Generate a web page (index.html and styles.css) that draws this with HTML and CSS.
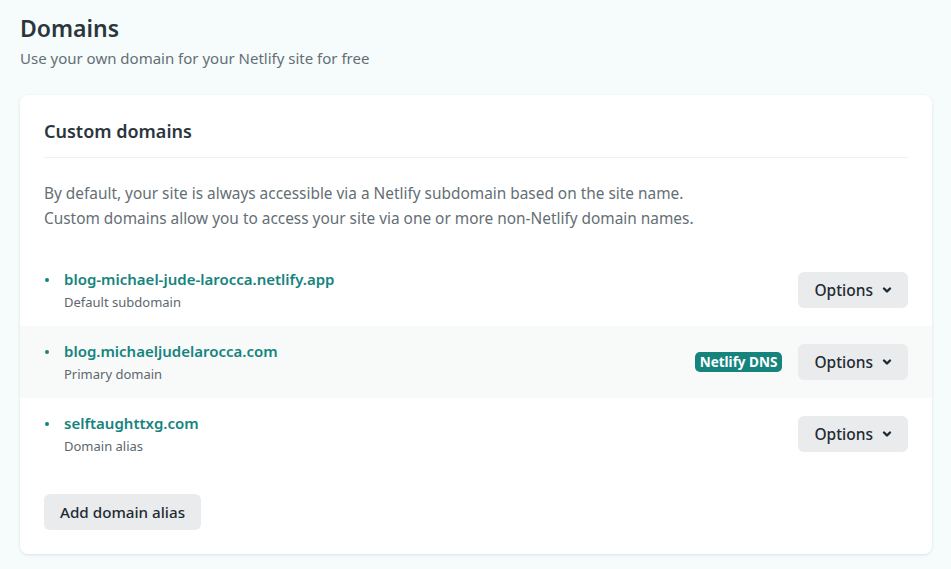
FILE: index.html
```html
<!DOCTYPE html>
<html>
<head>
<meta charset="utf-8">
<link rel="stylesheet" href="styles.css">
</head>
<body>
<div class="page">
  <header class="page-head">
    <h1 class="title">Domains</h1>
    <p class="subtitle">Use your own domain for your Netlify site for free</p>
  </header>
  <section class="card">
    <h2 class="card-title">Custom domains</h2>
    <p class="intro">By default, your site is always accessible via a Netlify subdomain based on the site name.<br>Custom domains allow you to access your site via one or more non-Netlify domain names.</p>
    <ul class="domains">
      <li class="domain">
        <div class="domain-info">
          <span class="bullet"></span>
          <div>
            <div class="domain-name">blog-michael-jude-larocca.netlify.app</div>
            <div class="domain-type">Default subdomain</div>
          </div>
        </div>
        <div class="domain-actions">
          <button class="btn">Options <svg class="chev" viewBox="0 0 10 10" width="10" height="10"><path d="M2 3.5 L5 6.5 L8 3.5" fill="none" stroke="#1e2a32" stroke-width="2.4" stroke-linecap="round" stroke-linejoin="round"/></svg></button>
        </div>
      </li>
      <li class="domain domain-hl">
        <div class="domain-info">
          <span class="bullet"></span>
          <div>
            <div class="domain-name">blog.michaeljudelarocca.com</div>
            <div class="domain-type">Primary domain</div>
          </div>
        </div>
        <div class="domain-actions">
          <span class="badge">Netlify DNS</span>
          <button class="btn">Options <svg class="chev" viewBox="0 0 10 10" width="10" height="10"><path d="M2 3.5 L5 6.5 L8 3.5" fill="none" stroke="#1e2a32" stroke-width="2.4" stroke-linecap="round" stroke-linejoin="round"/></svg></button>
        </div>
      </li>
      <li class="domain">
        <div class="domain-info">
          <span class="bullet"></span>
          <div>
            <div class="domain-name">selftaughttxg.com</div>
            <div class="domain-type">Domain alias</div>
          </div>
        </div>
        <div class="domain-actions">
          <button class="btn">Options <svg class="chev" viewBox="0 0 10 10" width="10" height="10"><path d="M2 3.5 L5 6.5 L8 3.5" fill="none" stroke="#1e2a32" stroke-width="2.4" stroke-linecap="round" stroke-linejoin="round"/></svg></button>
        </div>
      </li>
    </ul>
    <button class="btn btn-add">Add domain alias</button>
  </section>
</div>
</body>
</html>
```
FILE: styles.css
```css
html, body {
  margin: 0;
  padding: 0;
  background: #f6fcfc;
  font-family: "Noto Sans", "Open Sans", sans-serif;
  color: #2d3b41;
}
.page {
  padding: 12px 19px 16px 20px;
}
.page-head {
  margin-bottom: 26px;
}
.title {
  margin: 0;
  font-size: 23px;
  font-weight: 600;
  line-height: 32px;
  color: #2b363c;
}
.subtitle {
  margin: 3px 0 0;
  font-size: 15px;
  line-height: 22px;
  color: #646e74;
}
.card {
  background: #fff;
  border-radius: 8px;
  box-shadow: 0 1px 3px rgba(0, 40, 50, 0.12);
  padding: 22px 0 24px;
}
.card-title {
  margin: 0 24px;
  padding-bottom: 12px;
  border-bottom: 1px solid #eef1f2;
  font-size: 18px;
  font-weight: 600;
  line-height: 28px;
  color: #2b363c;
}
.intro {
  margin: 23px 24px 23px;
  font-size: 15.4px;
  line-height: 25px;
  color: #646e74;
}
.domains {
  list-style: none;
  margin: 0;
  padding: 0;
}
.domain {
  display: flex;
  align-items: center;
  justify-content: space-between;
  height: 72px;
  padding: 0 24px;
}
.domain-hl {
  background: #f8fafa;
}
.domain-info {
  display: flex;
  align-items: flex-start;
}
.bullet {
  width: 20px;
  height: 24px;
  display: flex;
  align-items: center;
}
.bullet::before {
  content: "";
  display: block;
  width: 4px;
  height: 4px;
  border-radius: 50%;
  background: #15847d;
  margin-left: 1px;
  margin-top: 1px;
}
.domain-name {
  font-size: 15px;
  font-weight: 600;
  line-height: 24px;
  color: #15847d;
}
.domain-type {
  font-size: 13px;
  line-height: 22px;
  color: #5d676d;
}
.domain-actions {
  display: flex;
  align-items: center;
  gap: 16px;
}
.btn {
  display: inline-flex;
  align-items: center;
  gap: 9px;
  height: 36px;
  padding: 0 16px;
  border: 0;
  border-radius: 6px;
  background: #e9ebed;
  font-family: inherit;
  font-size: 15.5px;
  font-weight: 500;
  color: #1e2a32;
}
.chev {
  display: block;
}
.badge {
  display: inline-block;
  background: #15847d;
  color: #fff;
  font-size: 13.5px;
  font-weight: 700;
  line-height: 20px;
  padding: 0 5px;
  border-radius: 5px;
}
.btn-add {
  margin: 24px 24px 0;
  gap: 0;
  font-size: 15.2px;
}
```
